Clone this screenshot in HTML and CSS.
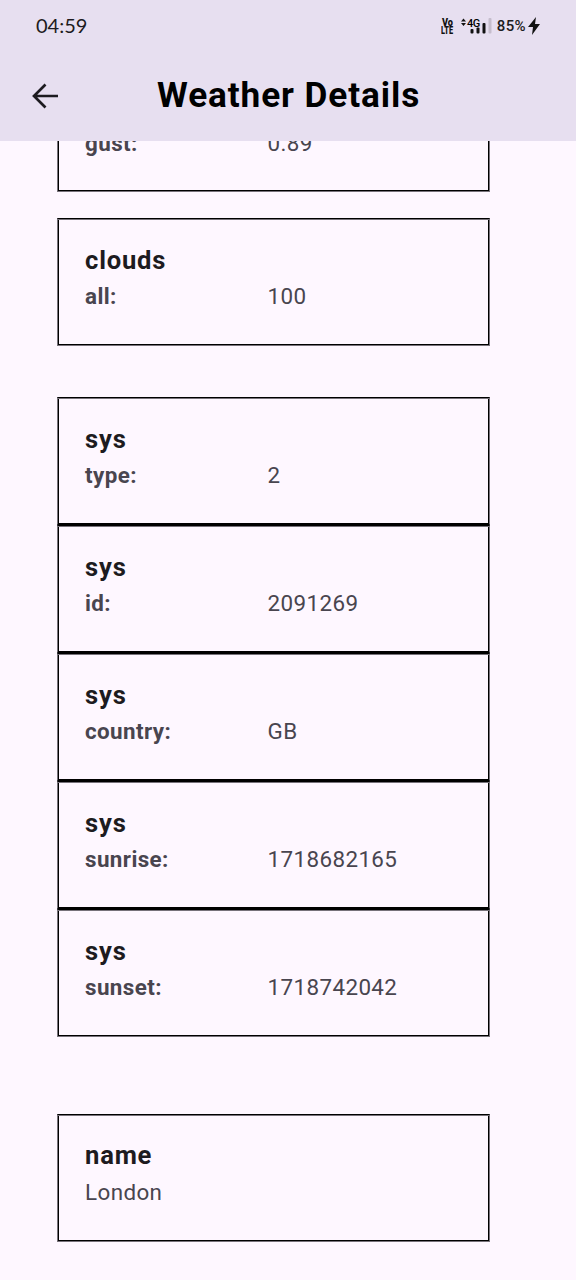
FILE: index.html
```html
<!DOCTYPE html>
<html lang="en">
<head>
<meta charset="utf-8">
<title>Weather Details</title>
<link rel="stylesheet" href="styles.css">
</head>
<body>
<header class="header">
  <div class="status">
    <span class="clock">04:59</span>
    <div class="indicators">
      <svg class="volte" width="13" height="18" viewBox="0 0 13 18">
        <text x="1" y="8.500" textLength="11" lengthAdjust="spacingAndGlyphs">Vo</text>
        <text x="0" y="17" textLength="12" lengthAdjust="spacingAndGlyphs">LTE</text>
      </svg>
      <svg class="signal" width="31" height="18" viewBox="0 0 31 18">
        <path d="M0 4.500L2.500 1.500L5 4.500ZM0 6L2.500 9L5 6Z" fill="#111"/>
        <text x="6" y="10" class="network">4G</text>
        <rect x="9.500" y="12" width="3" height="4.500" rx="1" fill="#111"/>
        <rect x="15.500" y="10.500" width="3" height="6" rx="1" fill="#111"/>
        <rect x="21.500" y="6" width="3" height="10.500" rx="1" fill="#111"/>
        <rect x="27.500" y="1" width="3" height="15.500" rx="1" fill="#c5bdcc"/>
      </svg>
      <span class="percent">85%</span>
      <svg class="bolt" width="12" height="18" viewBox="0 0 12 18"><path d="M8 0L0 10h5L4 18L12 7H7Z" fill="#111"/></svg>
    </div>
  </div>
  <div class="appbar">
    <svg class="back" width="32" height="32" viewBox="0 0 32 32"><path d="M29 16H5M16.500 4.500L5 16L16.500 27.500" fill="none" stroke="#1d1b20" stroke-width="2.700"/></svg>
    <h1 class="title">Weather Details</h1>
  </div>
</header>
<main class="content">
  <section class="card partial"><div class="row"><span class="label">gust:</span><span>0.89</span></div></section>
  <section class="card clouds"><h2>clouds</h2><div class="row"><span class="label">all:</span><span>100</span></div></section>
  <div class="group">
    <section class="card"><h2>sys</h2><div class="row"><span class="label">type:</span><span>2</span></div></section>
    <section class="card"><h2>sys</h2><div class="row"><span class="label">id:</span><span>2091269</span></div></section>
    <section class="card"><h2>sys</h2><div class="row"><span class="label">country:</span><span>GB</span></div></section>
    <section class="card"><h2>sys</h2><div class="row"><span class="label">sunrise:</span><span>1718682165</span></div></section>
    <section class="card"><h2>sys</h2><div class="row"><span class="label">sunset:</span><span>1718742042</span></div></section>
  </div>
  <section class="card name"><h2>name</h2><div class="row"><span>London</span></div></section>
</main>
</body>
</html>
```
FILE: styles.css
```css
* { box-sizing: border-box; }
body { margin: 0; height: 1280px; overflow: hidden; background: #fef7ff; font-family: Roboto, sans-serif; color: #1d1b20; }
.header { height: 141px; background: #e7dff0; }
.status { height: 51px; padding: 0 36px; display: flex; align-items: center; justify-content: space-between; }
.clock { margin-bottom: 2px; font: 20px/24px Lato, sans-serif; }
.indicators { display: flex; align-items: center; }
.volte { margin-right: 7px; font: 900 10px Roboto, sans-serif; fill: #111; }
.network { font: 500 11px Roboto, sans-serif; letter-spacing: -.5px; }
.percent { margin: 0 2px 0 5px; font: 500 15px Roboto, sans-serif; letter-spacing: .4px; }
.appbar { height: 88px; padding-left: 29px; display: flex; align-items: center; }
.back { margin-top: 2px; }
.title { margin: 0 0 0 96px; font-size: 35.200px; line-height: 44px; font-weight: 700; color: #000; letter-spacing: .9px; }
.content { height: 1139px; overflow: hidden; padding-left: 57px; }
.card { display: flow-root; width: 433px; height: 128px; border: 1px solid #77727a; border-top-color: #000; padding: 23px 27px; box-shadow: inset 0 1px #77727a, inset 0 0 0 1px #000; }
.card h2 { margin: 0; font-size: 25.600px; line-height: 36px; font-weight: 700; letter-spacing: .8px; }
.row { display: flex; font-size: 22.400px; line-height: 37px; letter-spacing: .4px; color: #49454f; }
.label { width: 182.500px; font-weight: 700; }
.partial { height: 51px; border-top: 0; padding-top: 0; box-shadow: inset 1px 0 #000, inset -1px -1px #000; }
.partial .row { margin-top: -16px; }
.clouds { margin-top: 26px; }
.group { margin: 51px 0 77px; }
.group .card:not(:last-child) { border-bottom-color: #000; }
.name { padding-top: 22px; }
.name .row { padding-top: 1px; }
```
